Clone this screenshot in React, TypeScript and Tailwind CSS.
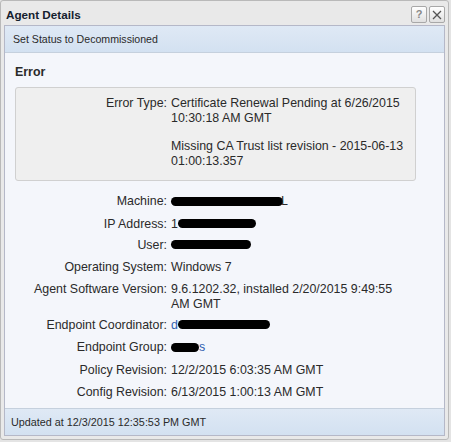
import React from "react";

const font = { fontFamily: "'Liberation Sans', Arial, sans-serif" };

function Blob({ w, children }: { w: number; children?: React.ReactNode }) {
  return (
    <span className="inline-flex items-center">
      <span className="inline-block h-[9px] rounded-full bg-black" style={{ width: w }} />
      {children}
    </span>
  );
}

function Row({ label, children, mt = "mt-[6.7px]" }: { label: string; children: React.ReactNode; mt?: string }) {
  return (
    <div className={`flex ${mt}`}>
      <div className="w-[156px] shrink-0 text-right pr-[4px]">{label}:</div>
      <div className="w-[240px]">{children}</div>
    </div>
  );
}

export default function App() {
  return (
    <div className="w-[451px] h-[442px] bg-[#e4e4e4] text-[12.4px] text-[#2a2a2a] leading-[15px]" style={font}>
      <div className="w-[449px] h-[440px] border border-[#b9b9b9] rounded-[3px] bg-[#e9e9e9] flex flex-col">
        <div className="h-[24px] shrink-0 flex items-center justify-between pl-[5px] pr-[3px]">
          <span className="font-bold text-[11.7px] text-[#15212e] mt-[2px]">Agent Details</span>
          <div className="flex gap-[2px] mt-[3px]">
            <div className="w-[16px] h-[17px] border border-[#a8a8a8] rounded-[2px] bg-gradient-to-b from-white to-[#e0e0e0] flex items-center justify-center text-[11px] font-bold text-[#888]">?</div>
            <div className="w-[16px] h-[17px] border border-[#a8a8a8] rounded-[2px] bg-gradient-to-b from-white to-[#e0e0e0] flex items-center justify-center">
              <svg width="10" height="10" viewBox="0 0 10 10"><path d="M1 1L9 9M9 1L1 9" stroke="#555" strokeWidth="1.3" /></svg>
            </div>
          </div>
        </div>
        <div className="mx-[3px] flex-1 border border-[#b5b8c8] flex flex-col bg-[#f4f6fb]">
          <div className="h-[27px] shrink-0 flex items-center pl-[8px] text-[10.6px] bg-gradient-to-b from-[#dfe9f5] to-[#d3e1f1] border-b border-[#c5d0dd]">
            Set Status to Decommissioned
          </div>
          <div className="flex-1 pl-[10px]">
            <div className="font-bold mt-[12px]">Error</div>
            <div className="mt-[7px] w-[401px] h-[94px] border border-[#d0d0d0] rounded-[3px] bg-[#efefef] pt-[8px]">
              <div className="flex">
                <div className="w-[155px] shrink-0 text-right pr-[4px]">Error Type:</div>
                <div>
                  <div>Certificate Renewal Pending at 6/26/2015<br />10:30:18 AM GMT</div>
                  <div className="mt-[13px]">Missing CA Trust list revision - 2015-06-13<br />01:00:13.357</div>
                </div>
              </div>
            </div>
            <div className="mt-[13px]">
              <Row label="Machine" mt="mt-0"><Blob w={112}><span className="-ml-[2px]">L</span></Blob></Row>
              <Row label="IP Address">1<Blob w={78} /></Row>
              <Row label="User"><Blob w={80} /></Row>
              <Row label="Operating System">Windows 7</Row>
              <Row label="Agent Software Version">9.6.1202.32, installed 2/20/2015 9:49:55<br />AM GMT</Row>
              <Row label="Endpoint Coordinator"><span className="text-[#3060b0]">d</span><Blob w={92} /></Row>
              <Row label="Endpoint Group"><Blob w={28}><span className="text-[#3060b0]">s</span></Blob></Row>
              <Row label="Policy Revision">12/2/2015 6:03:35 AM GMT</Row>
              <Row label="Config Revision">6/13/2015 1:00:13 AM GMT</Row>
            </div>
          </div>
          <div className="h-[27px] shrink-0 flex items-center pl-[6px] text-[10.8px] bg-gradient-to-b from-[#dfe9f5] to-[#d3e1f1] border-t border-[#c5d0dd]">
            Updated at 12/3/2015 12:35:53 PM GMT
          </div>
        </div>
        <div className="h-[3px] shrink-0" />
      </div>
    </div>
  );
}
